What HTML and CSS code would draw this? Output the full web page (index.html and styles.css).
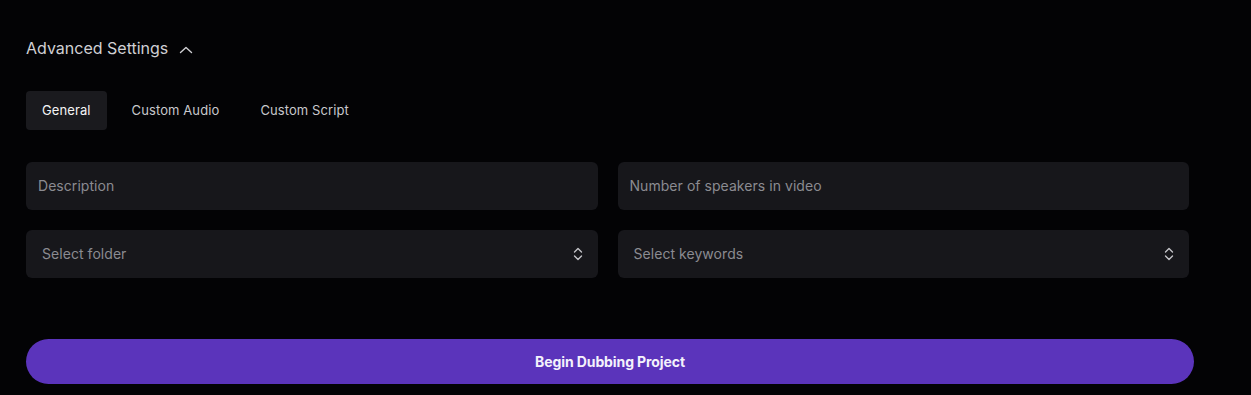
FILE: index.html
```html
<!DOCTYPE html>
<html lang="en">
<head>
  <meta charset="UTF-8" />
  <meta name="viewport" content="width=device-width, initial-scale=1.0"/>
  <title>Advanced Settings</title>
  <link rel="stylesheet" href="styles.css">
</head>
<body>
  <div class="panel">
    <button class="toggle">
      Advanced Settings
      <svg width="14" height="10" viewBox="0 0 14 10" fill="none" stroke="currentColor" stroke-width="1.4" stroke-linecap="round" stroke-linejoin="round"><path d="M1.5 7.5 L7 2.5 L12.5 7.5"/></svg>
    </button>

    <div class="tabs">
      <button class="tab active">General</button>
      <button class="tab">Custom Audio</button>
      <button class="tab">Custom Script</button>
    </div>

    <div class="fields">
      <input class="field" type="text" placeholder="Description">
      <input class="field" type="text" placeholder="Number of speakers in video">
      <div class="field select">
        <span>Select folder</span>
        <svg width="10" height="16" viewBox="0 0 10 16" fill="none" stroke="currentColor" stroke-width="1.4" stroke-linecap="round" stroke-linejoin="round"><path d="M1.5 6 L5 2.5 L8.5 6"/><path d="M1.5 10 L5 13.5 L8.5 10"/></svg>
      </div>
      <div class="field select">
        <span>Select keywords</span>
        <svg width="10" height="16" viewBox="0 0 10 16" fill="none" stroke="currentColor" stroke-width="1.4" stroke-linecap="round" stroke-linejoin="round"><path d="M1.5 6 L5 2.5 L8.5 6"/><path d="M1.5 10 L5 13.5 L8.5 10"/></svg>
      </div>
    </div>

    <button class="submit">Begin Dubbing Project</button>
  </div>
</body>
</html>
```

FILE: styles.css
```css
* {
  box-sizing: border-box;
}

body {
  margin: 0;
  background: #030305;
  color: #d4d4d8;
  font-family: Inter, "Noto Sans", sans-serif;
}

.panel {
  width: 1168px;
  margin-left: 26px;
  padding-top: 38px;
}

button {
  font-family: inherit;
  cursor: pointer;
}

.toggle {
  display: flex;
  align-items: center;
  gap: 11px;
  background: none;
  border: none;
  padding: 0;
  height: 20px;
  color: #d0d0d4;
  font-size: 16px;
  letter-spacing: 0;
}

.toggle svg {
  margin-top: 3px;
}

.tabs {
  display: flex;
  gap: 9px;
  margin-top: 33px;
}

.tab {
  height: 39px;
  padding: 0 16px 2px;
  background: none;
  border: none;
  border-radius: 4px;
  color: #c8c8cc;
  font-size: 13px;
  letter-spacing: 0.1px;
}

.tab.active {
  background: #1a1a1e;
  color: #f4f4f5;
}

.fields {
  display: grid;
  grid-template-columns: 1fr 1fr;
  gap: 20px;
  margin-top: 32px;
  margin-right: 5px;
}

.field {
  height: 48px;
  background: #17171b;
  border: none;
  border-radius: 6px;
  padding: 0 12px 2px;
  color: #d4d4d8;
  font-family: inherit;
  font-size: 14px;
  letter-spacing: 0.05px;
  outline: none;
}

.field::placeholder {
  color: #8b8b91;
}

.select {
  display: flex;
  align-items: center;
  justify-content: space-between;
  padding: 0 15px 2px 16px;
  color: #8b8b91;
}

.select svg {
  color: #c4c4c8;
  margin-top: 2px;
}

.submit {
  display: block;
  width: 100%;
  height: 45px;
  margin-top: 61px;
  background: #5b34bb;
  border: none;
  border-radius: 23px;
  color: #f4f2fb;
  font-size: 14px;
  font-weight: 700;
  letter-spacing: -0.1px;
}
```
